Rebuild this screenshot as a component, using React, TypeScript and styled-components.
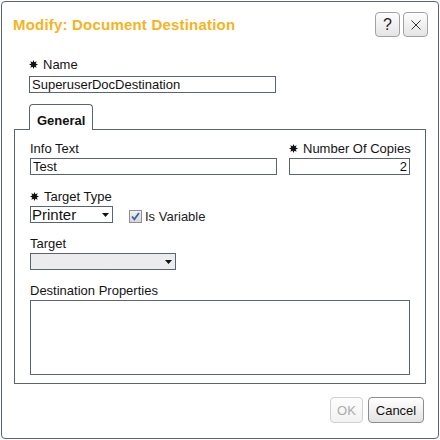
import React from "react";
import styled, { createGlobalStyle } from "styled-components";

const GlobalStyle = createGlobalStyle`
  html, body { margin: 0; padding: 0; background: #ffffff; }
  body {
    font-family: "Liberation Sans", Arial, sans-serif;
    font-size: 13px;
    color: #1a1a1a;
  }
`;

const BORDER = "#5a6376";

const Frame = styled.div`
  width: 440px;
  height: 440px;
  padding: 1px;
  box-sizing: border-box;
`;

const Dialog = styled.div`
  width: 438px;
  height: 438px;
  box-sizing: border-box;
  border: 1px solid ${BORDER};
  border-radius: 4px;
  background: #fff;
  display: flex;
  flex-direction: column;
`;

const Header = styled.div`
  display: flex;
  justify-content: space-between;
  align-items: flex-start;
  padding: 10px 10px 0 11px;
`;

const Title = styled.h1`
  margin: 4px 0 0;
  font-size: 15px;
  line-height: 18px;
  font-weight: bold;
  letter-spacing: 0.2px;
  color: #f6b41c;
`;

const HeaderButtons = styled.div`
  display: flex;
  gap: 3px;
`;

const IconButton = styled.button`
  width: 25px;
  height: 25px;
  box-sizing: border-box;
  padding: 0;
  border: 1px solid #a2a2a2;
  border-radius: 4px;
  background: linear-gradient(#fdfdfd, #e4e4e4);
  display: flex;
  align-items: center;
  justify-content: center;
  font-family: "Liberation Sans", Arial, sans-serif;
  font-size: 16px;
  color: #222;
`;

const Body = styled.div`
  padding: 20px 12px 0;
  display: flex;
  flex-direction: column;
`;

const NameField = styled.div`
  margin-left: 15px;
  display: flex;
  flex-direction: column;
`;

const Label = styled.div<{ $mb?: number }>`
  display: flex;
  align-items: center;
  gap: 5px;
  height: 15px;
  line-height: 15px;
  margin-bottom: ${(p) => p.$mb ?? 2}px;
  white-space: nowrap;
  color: #141414;
`;

const TextInput = styled.input<{ $w: number; $align?: string }>`
  display: block;
  width: ${(p) => p.$w}px;
  height: 17px;
  box-sizing: border-box;
  border: 1px solid ${BORDER};
  padding: 0 2px 1px;
  margin: 0;
  font-family: "Liberation Sans", Arial, sans-serif;
  font-size: 13px;
  color: #111;
  background: #fff;
  outline: none;
  text-align: ${(p) => p.$align ?? "left"};
`;

const TabStrip = styled.div`
  display: flex;
  padding-left: 15px;
  margin-top: 11px;
`;

const Tab = styled.div`
  position: relative;
  z-index: 1;
  height: 26px;
  box-sizing: border-box;
  padding: 8px 7px 0;
  margin-bottom: -1px;
  border: 1px solid ${BORDER};
  border-bottom: 0;
  border-radius: 4px 4px 0 0;
  background: #fff;
  font-weight: bold;
  line-height: 15px;
  color: #111;
`;

const Panel = styled.div`
  border: 1px solid ${BORDER};
  padding: 11px 15px 8px;
  display: flex;
  flex-direction: column;
`;

const Row = styled.div<{ $mt?: number }>`
  display: flex;
  align-items: flex-start;
  gap: 12px;
  margin-top: ${(p) => p.$mt ?? 0}px;
`;

const Field = styled.div<{ $mt?: number }>`
  display: flex;
  flex-direction: column;
  margin-top: ${(p) => p.$mt ?? 0}px;
`;

const SelectBox = styled.div<{ $w: number; $bg?: string }>`
  width: ${(p) => p.$w}px;
  height: 17px;
  box-sizing: border-box;
  border: 1px solid ${BORDER};
  background: ${(p) => p.$bg ?? "#fff"};
  display: flex;
  align-items: center;
  justify-content: space-between;
  padding: 0 3px 0 1px;
  font-size: 15px;
  line-height: 15px;
  color: #111;
`;

const CheckLabel = styled.label`
  display: flex;
  align-items: center;
  gap: 3px;
  height: 13px;
  line-height: 13px;
  margin: 4px 0 0 4px;
  color: #222;
`;

const TextArea = styled.textarea`
  display: block;
  width: 380px;
  height: 75px;
  box-sizing: border-box;
  border: 1px solid ${BORDER};
  margin: 0;
  padding: 2px;
  resize: none;
  outline: none;
  font-family: "Liberation Sans", Arial, sans-serif;
  font-size: 13px;
`;

const Footer = styled.div`
  display: flex;
  justify-content: flex-end;
  gap: 5px;
  padding: 13px 14px 0 0;
`;

const FooterButton = styled.button<{ $w: number; $disabled?: boolean }>`
  width: ${(p) => p.$w}px;
  height: 26px;
  box-sizing: border-box;
  padding: 0;
  border: 1px solid ${(p) => (p.$disabled ? "#d0d0d0" : "#8c8c8c")};
  border-radius: 4px;
  background: ${(p) =>
    p.$disabled ? "linear-gradient(#fdfdfd, #f2f2f2)" : "linear-gradient(#ffffff, #e3e3e3)"};
  color: ${(p) => (p.$disabled ? "#ababab" : "#111")};
  font-family: "Liberation Sans", Arial, sans-serif;
  font-size: 13px;
`;

const starPoints = (() => {
  const pts: string[] = [];
  for (let i = 0; i < 16; i++) {
    const r = i % 2 === 0 ? 4.5 : 2.4;
    const a = (Math.PI / 8) * i - Math.PI / 2;
    pts.push(`${(4.5 + r * Math.cos(a)).toFixed(2)},${(4.5 + r * Math.sin(a)).toFixed(2)}`);
  }
  return pts.join(" ");
})();

const Star = () => (
  <svg width="9" height="9" viewBox="0 0 9 9" aria-hidden="true">
    <polygon points={starPoints} fill="#111" />
  </svg>
);

const Arrow = () => (
  <svg width="7" height="4" viewBox="0 0 7 4" aria-hidden="true">
    <polygon points="0,0 7,0 3.5,4" fill="#111" />
  </svg>
);

const CloseIcon = () => (
  <svg width="10" height="10" viewBox="0 0 10 10" aria-hidden="true">
    <path d="M0.5 0.5 L9.5 9.5 M9.5 0.5 L0.5 9.5" stroke="#333" strokeWidth="1" fill="none" />
  </svg>
);

const CheckIcon = () => (
  <svg width="13" height="13" viewBox="0 0 13 13" aria-hidden="true">
    <defs>
      <linearGradient id="cbg" x1="0" y1="0" x2="0" y2="1">
        <stop offset="0" stopColor="#f2f2f2" />
        <stop offset="1" stopColor="#d6d6d6" />
      </linearGradient>
    </defs>
    <rect x="0.5" y="0.5" width="12" height="12" fill="url(#cbg)" stroke="#8f8f8f" />
    <path d="M3 6.5 L5.4 9.3 L10 3" stroke="#3f5fa8" strokeWidth="1.8" fill="none" />
  </svg>
);

export default function App() {
  return (
    <>
      <GlobalStyle />
      <Frame>
        <Dialog>
          <Header>
            <Title>Modify: Document Destination</Title>
            <HeaderButtons>
              <IconButton>?</IconButton>
              <IconButton>
                <CloseIcon />
              </IconButton>
            </HeaderButtons>
          </Header>
          <Body>
            <NameField>
              <Label $mb={4}>
                <Star />
                Name
              </Label>
              <TextInput $w={247} defaultValue="SuperuserDocDestination" />
            </NameField>
            <TabStrip>
              <Tab>General</Tab>
            </TabStrip>
            <Panel>
              <Row>
                <Field>
                  <Label>Info Text</Label>
                  <TextInput $w={247} defaultValue="Test" />
                </Field>
                <Field>
                  <Label>
                    <Star />
                    Number Of Copies
                  </Label>
                  <TextInput $w={121} $align="right" defaultValue="2" />
                </Field>
              </Row>
              <Field $mt={14}>
                <Label>
                  <Star />
                  Target Type
                </Label>
                <Row>
                  <SelectBox $w={83}>
                    <span>Printer</span>
                    <Arrow />
                  </SelectBox>
                  <CheckLabel>
                    <CheckIcon />
                    Is Variable
                  </CheckLabel>
                </Row>
              </Field>
              <Field $mt={13}>
                <Label>Target</Label>
                <SelectBox $w={146} $bg="#ececec">
                  <span />
                  <Arrow />
                </SelectBox>
              </Field>
              <Field $mt={13}>
                <Label>Destination Properties</Label>
                <TextArea />
              </Field>
            </Panel>
          </Body>
          <Footer>
            <FooterButton $w={33} $disabled>
              OK
            </FooterButton>
            <FooterButton $w={56}>Cancel</FooterButton>
          </Footer>
        </Dialog>
      </Frame>
    </>
  );
}
